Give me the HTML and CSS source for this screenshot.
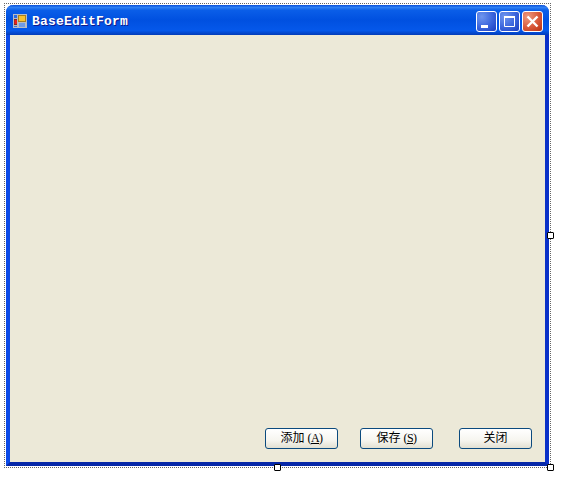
FILE: index.html
```html
<!DOCTYPE html>
<html lang="en">
<head>
    <meta charset="UTF-8">
    <title>BaseEditForm</title>
    <link rel="stylesheet" href="styles.css">
</head>
<body>

    <div class="design-surface">
        <div class="window">
            <div class="title-bar">
                <svg class="form-icon" width="14" height="14" viewBox="0 0 14 14">
                    <rect x="0" y="0" width="14" height="14" fill="#b8bcc4"/>
                    <rect x="1" y="1" width="3" height="3" fill="#2a6be0"/>
                    <rect x="1" y="5" width="3" height="6" fill="#7a2a28"/>
                    <rect x="1.5" y="6" width="2.5" height="4" fill="#e8201a"/>
                    <rect x="5" y="1" width="8" height="7" fill="#a8801c"/>
                    <rect x="6" y="2" width="6" height="5" fill="#f8c230"/>
                    <rect x="6" y="9" width="6" height="4" fill="#6f9be8"/>
                    <rect x="1" y="12" width="3" height="1" fill="#4a70c8"/>
                </svg>
                <span class="title-text">BaseEditForm</span>
                <div class="window-buttons">
                    <div class="win-btn">
                        <svg width="21" height="21" viewBox="0 0 21 21"><rect x="5" y="14" width="7" height="3" fill="#fff"/></svg>
                    </div>
                    <div class="win-btn">
                        <svg width="21" height="21" viewBox="0 0 21 21"><path d="M5.5 5.5h10v10h-10z" fill="none" stroke="#fff"/><rect x="5" y="5" width="11" height="2" fill="#fff"/></svg>
                    </div>
                    <div class="win-btn win-close">
                        <svg width="21" height="21" viewBox="0 0 21 21"><path d="M5.5 5.5l10 10M15.5 5.5l-10 10" stroke="#fff" stroke-width="2.4"/></svg>
                    </div>
                </div>
            </div>
            <div class="client-area">
                <div class="button-row">
                    <button class="form-btn">添加 <span class="mnemonic">(<u>A</u>)</span></button>
                    <button class="form-btn">保存 <span class="mnemonic">(<u>S</u>)</span></button>
                    <button class="form-btn form-btn-last">关闭</button>
                </div>
            </div>
        </div>

        <!-- Designer resize handles -->
        <span class="handle handle-right"></span>
        <span class="handle handle-bottom"></span>
        <span class="handle handle-corner"></span>
    </div>

</body>
</html>
```

FILE: styles.css
```css
html, body {
    height: 100%;
}

body {
    margin: 0;
    padding: 0;
    overflow: hidden;
    background-color: #fff;
    font-family: "Liberation Sans", "Noto Sans CJK SC", sans-serif;
}

.design-surface {
    position: relative;
    box-sizing: border-box;
    width: 547px;
    height: 465px;
    margin: 3px 0 0 4px;
    border: 1px dotted #666;
    padding: 1px;
}

.window {
    box-sizing: border-box;
    display: flex;
    flex-direction: column;
    height: 100%;
    border-radius: 7px 7px 0 0;
    border-style: solid;
    border-width: 0 4px 4px 4px;
    border-color: #0831d9 #0a30c8 #0628a8 #0a4ae8;
}

.title-bar {
    display: flex;
    align-items: center;
    flex-shrink: 0;
    box-sizing: border-box;
    height: 30px;
    margin: 0 -4px;
    padding: 2px 6px 0 7px;
    border-radius: 7px 7px 0 0;
    background: linear-gradient(to bottom, #0a50d8 0%, #2f80f4 8%, #0a5ee8 18%, #0050e0 50%, #0558ea 85%, #033cb8 100%);
}

.form-icon {
    flex-shrink: 0;
    margin-right: 5px;
}

.title-text {
    flex: 1;
    color: #fff;
    font-family: "Liberation Mono", "DejaVu Sans Mono", monospace;
    font-weight: bold;
    font-size: 13px;
    letter-spacing: 0.2px;
    text-shadow: 1px 1px 0 #0f1a8c;
}

.window-buttons {
    display: flex;
    gap: 2px;
}

.win-btn {
    box-sizing: border-box;
    width: 21px;
    height: 21px;
    border: 1px solid #fff;
    border-radius: 3px;
    background: radial-gradient(circle at 25% 25%, #6f96ee 0%, #3a64dc 55%, #1a3cc0 100%);
    overflow: hidden;
}

.win-btn svg {
    display: block;
    margin: -1px;
}

.win-close {
    background: radial-gradient(circle at 25% 25%, #ec9a80 0%, #d8583a 55%, #b83010 100%);
}

.client-area {
    display: flex;
    flex: 1;
    flex-direction: column;
    justify-content: flex-end;
    background-color: #ece9d8;
}

.button-row {
    display: flex;
    justify-content: flex-end;
    gap: 22px;
    padding: 0 13px 13px 0;
}

.form-btn {
    box-sizing: border-box;
    width: 73px;
    height: 21px;
    padding: 0;
    border: 1px solid #0b4a7e;
    border-radius: 3px;
    background: linear-gradient(to bottom, #fff 0%, #f6f5ef 60%, #e2e0d2 100%);
    color: #000;
    font-family: "Liberation Serif", "Noto Sans CJK SC", serif;
    font-size: 12px;
    line-height: 17px;
    cursor: pointer;
}

.mnemonic {
    font-size: 12px;
    letter-spacing: -0.6px;
}

.form-btn-last {
    margin-left: 4px;
}

.handle {
    position: absolute;
    box-sizing: border-box;
    width: 7px;
    height: 7px;
    background: #fff;
    border: 1px solid #000;
    border-radius: 1px;
}

.handle-right {
    right: -4px;
    top: 228px;
}

.handle-bottom {
    left: 269px;
    bottom: -4px;
}

.handle-corner {
    right: -4px;
    bottom: -4px;
}
```
